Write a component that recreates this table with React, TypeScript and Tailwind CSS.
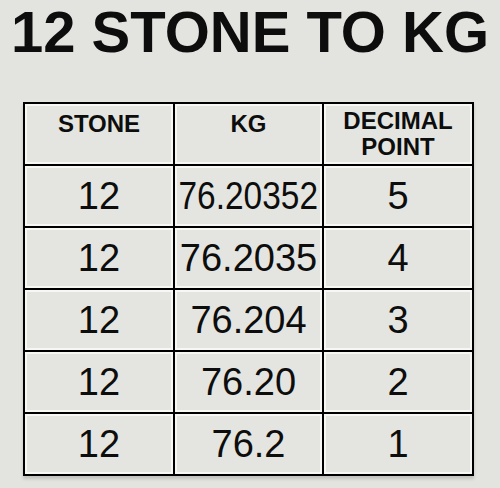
import React from "react";

const rows = [
  { stone: "12", kg: "76.20352", dp: "5", squeeze: true },
  { stone: "12", kg: "76.2035", dp: "4" },
  { stone: "12", kg: "76.204", dp: "3" },
  { stone: "12", kg: "76.20", dp: "2" },
  { stone: "12", kg: "76.2", dp: "1" },
];

const cell =
  "h-[62px] border-r-2 border-b-2 border-black bg-[#e4e5e0] shadow-[inset_0_0_0_2px_#f7f8f4] flex justify-center";

export default function App() {
  return (
    <div
      className="w-[500px] h-[488px] bg-[#e3e4df] text-[#0d0d0d] flex flex-col items-center overflow-hidden"
      style={{ fontFamily: '"Liberation Sans", Arial, sans-serif' }}
    >
      {/* 标题 */}
      <h1 className="pt-[3px] text-[58px] leading-none font-bold whitespace-nowrap">
        12 STONE TO KG
      </h1>

      {/* 表格 */}
      <div className="mt-[41px] ml-[-3px] grid grid-cols-[150px_149px_150px] border-l-2 border-t-2 border-black shadow-[0_3px_3px_rgba(0,0,0,0.15)]">
        <div className={`${cell} items-start pt-[7px]`}>
          <span className="text-[24px] leading-[26px] font-bold">STONE</span>
        </div>
        <div className={`${cell} items-start pt-[7px]`}>
          <span className="text-[24px] leading-[26px] font-bold">KG</span>
        </div>
        <div className={`${cell} items-start pt-[4px]`}>
          <span className="text-[24px] leading-[26px] font-bold text-center">
            DECIMAL
            <br />
            POINT
          </span>
        </div>

        {rows.map((r, i) => (
          <React.Fragment key={i}>
            <div className={`${cell} items-center`}>
              <span className="text-[38px] leading-none">{r.stone}</span>
            </div>
            <div className={`${cell} items-center`}>
              <span
                className={`text-[38px] leading-none whitespace-nowrap ${
                  r.squeeze ? "scale-x-[0.88]" : ""
                }`}
              >
                {r.kg}
              </span>
            </div>
            <div className={`${cell} items-center`}>
              <span className="text-[38px] leading-none">{r.dp}</span>
            </div>
          </React.Fragment>
        ))}
      </div>
    </div>
  );
}
